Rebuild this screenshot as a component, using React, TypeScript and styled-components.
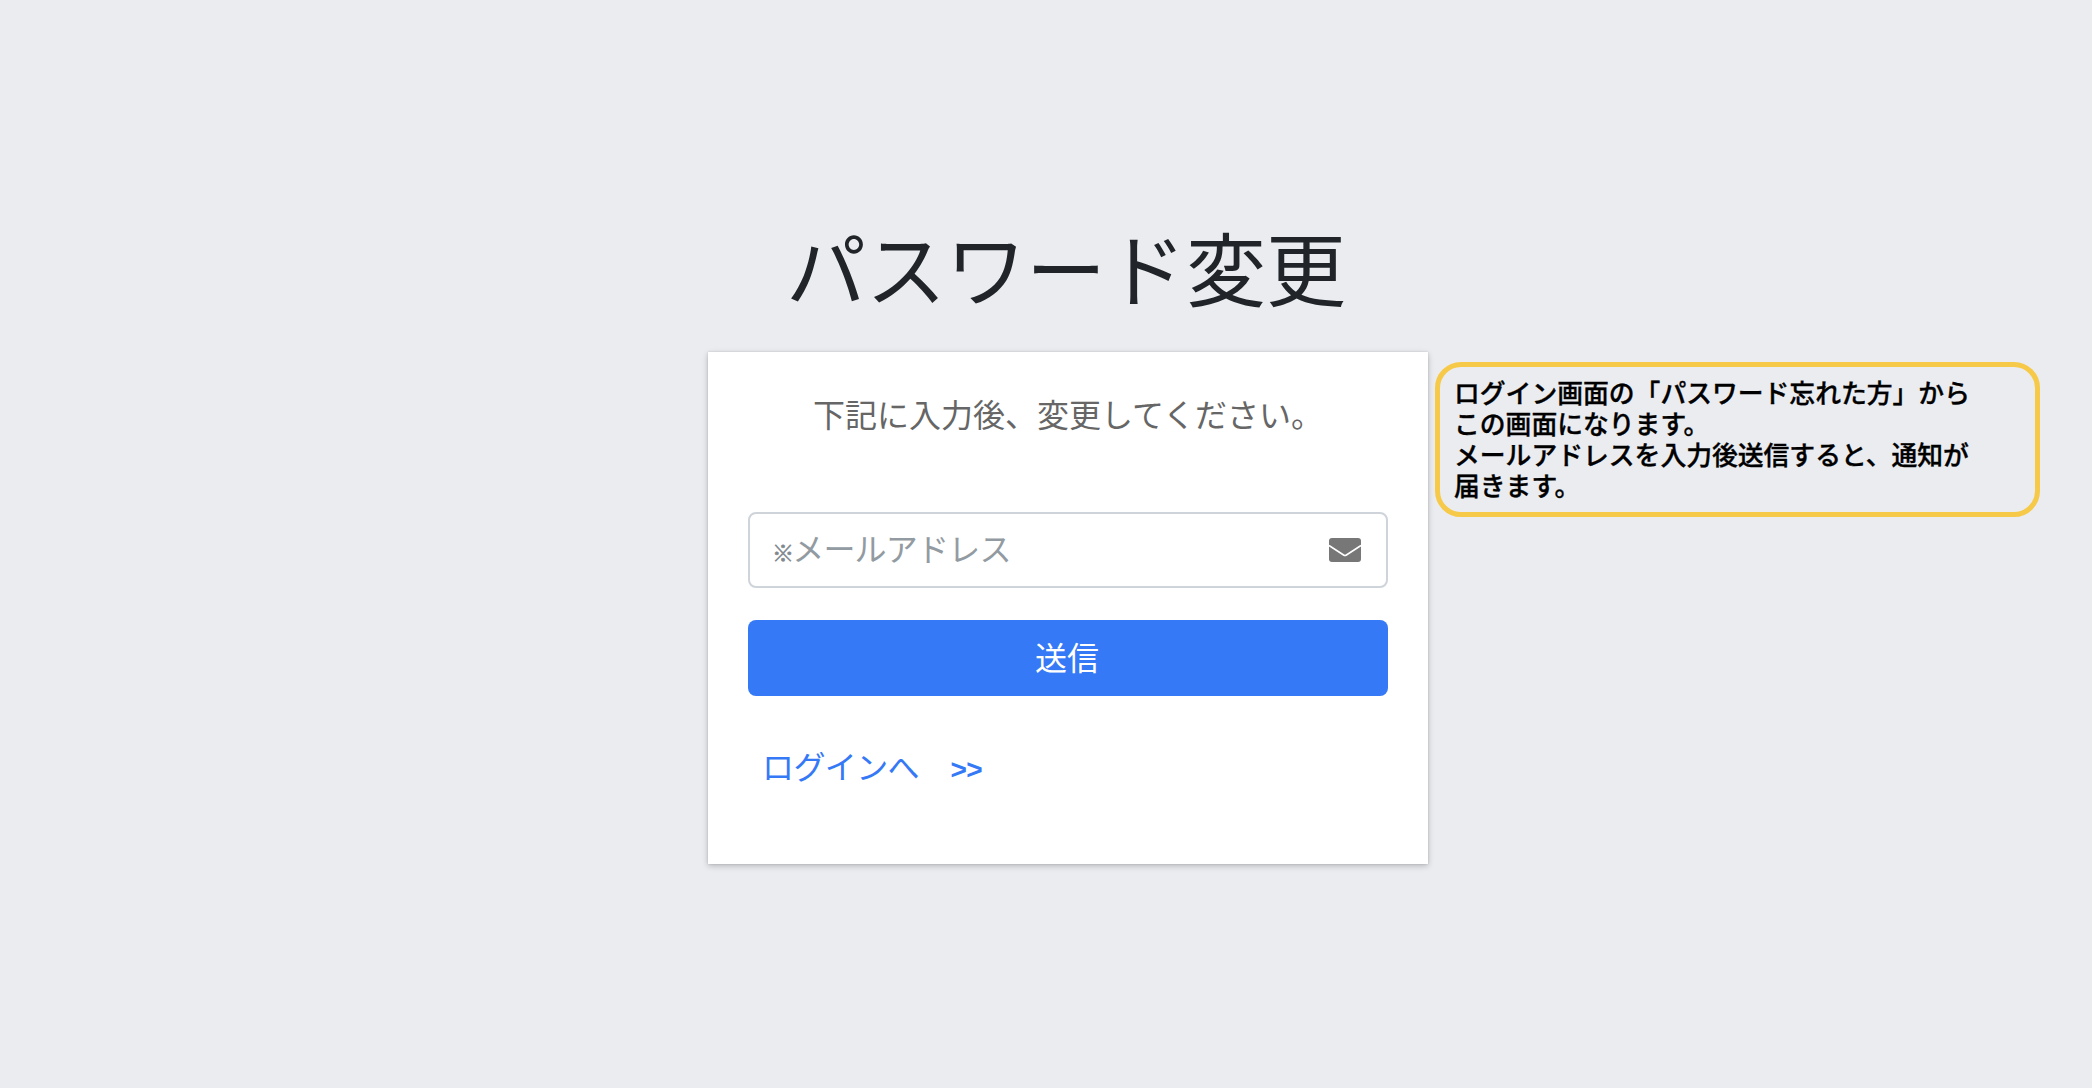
import React from "react";
import styled, { createGlobalStyle } from "styled-components";

const Global = createGlobalStyle`
  html, body { margin: 0; padding: 0; }
  body {
    background: #eaecf0;
    font-family: "Liberation Sans", "Noto Sans CJK JP", sans-serif;
  }
`;

const Page = styled.main`
  min-height: 1088px;
  box-sizing: border-box;
  padding: 225px 0 0 44px;
  display: flex;
  flex-direction: column;
  align-items: center;
  background: #eaecf0;
`;

const Title = styled.h1`
  margin: 0 0 31px;
  font-size: 80px;
  line-height: 96px;
  font-weight: 400;
  color: #212529;
  text-align: center;
  transform: translateX(-2px);
`;

const CardWrap = styled.div`
  position: relative;
  width: 720px;
`;

const Card = styled.section`
  box-sizing: border-box;
  height: 512px;
  padding: 40px;
  background: #fff;
  box-shadow: 0 0 2px rgba(0, 0, 0, 0.13), 0 2px 6px rgba(0, 0, 0, 0.22);
  display: flex;
  flex-direction: column;
`;

const Lead = styled.p`
  margin: 0 0 64px;
  font-size: 32px;
  line-height: 48px;
  color: #666;
  text-align: center;
  height: 56px;
`;

const Field = styled.div`
  box-sizing: border-box;
  height: 76px;
  border: 2px solid #ced4da;
  border-radius: 8px;
  padding: 0 25px 6px 22px;
  display: flex;
  align-items: center;
  justify-content: space-between;
  background: #fff;
`;

const Placeholder = styled.span`
  font-size: 32px;
  letter-spacing: -0.8px;
  color: #939ba2;
  display: flex;
  align-items: baseline;
`;

const Mark = styled.span`
  font-size: 22px;
  margin-right: -1px;
  font-weight: 700;
  color: #80888f;
  -webkit-text-stroke: 0.6px #80888f;
`;

const MailSvg = styled.svg`
  width: 32px;
  height: 24px;
  display: block;
  margin-top: 6px;
`;

const Submit = styled.button`
  margin-top: 32px;
  height: 76px;
  padding: 0 2px 4px 0;
  border: 0;
  border-radius: 8px;
  background: #3579f6;
  color: #fff;
  font: inherit;
  font-size: 32px;
  cursor: pointer;
`;

const LoginLink = styled.a`
  margin: 48px 0 0 14px;
  font-size: 32px;
  line-height: 48px;
  letter-spacing: -0.6px;
  color: #3579f6;
  text-decoration: none;
`;

const Arrows = styled.span`
  font-size: 28px;
  font-weight: 700;
`;

const Note = styled.aside`
  position: absolute;
  left: calc(100% + 7px);
  top: 10px;
  box-sizing: border-box;
  width: 605px;
  height: 155px;
  padding: 12px 14px;
  border: 5px solid #f7c948;
  border-radius: 26px;
  font-size: 25.8px;
  line-height: 31px;
  font-weight: 500;
  -webkit-text-stroke: 0.35px #000;
  color: #000;
  white-space: nowrap;
`;

export default function App() {
  return (
    <>
      <Global />
      <Page>
        <Title>パスワード変更</Title>
        <CardWrap>
          <Card>
            <Lead>下記に入力後、変更してください。</Lead>
            <Field>
              <Placeholder>
                <Mark>※</Mark>メールアドレス
              </Placeholder>
              <MailSvg viewBox="0 0 32 24" aria-hidden="true">
                <rect width="32" height="24" rx="3" fill="#777" />
                <path d="M0 7.5 L14.6 17 Q16 17.9 17.4 17 L32 7.5" fill="none" stroke="#fff" strokeWidth="1.6" />
              </MailSvg>
            </Field>
            <Submit type="button">送信</Submit>
            <LoginLink href="#">
              ログインへ　<Arrows>&gt;&gt;</Arrows>
            </LoginLink>
          </Card>
          <Note>
            ログイン画面の「パスワード忘れた方」から
            <br />
            この画面になります。
            <br />
            メールアドレスを入力後送信すると、通知が
            <br />
            届きます。
          </Note>
        </CardWrap>
      </Page>
    </>
  );
}
